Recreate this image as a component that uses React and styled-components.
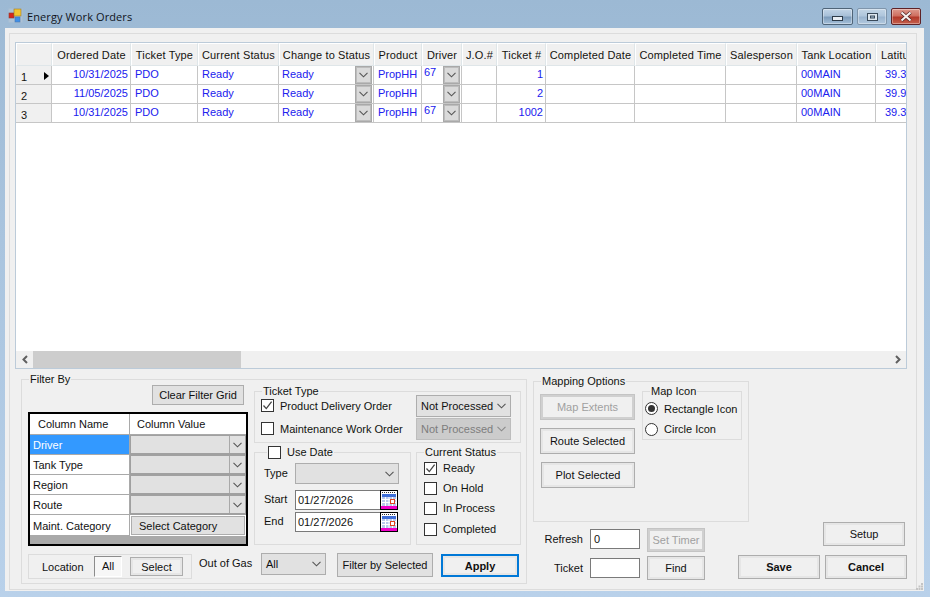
import React from 'react';
import styled, { createGlobalStyle } from 'styled-components';

const GlobalStyle = createGlobalStyle`
  html, body { margin: 0; padding: 0; background: #b9d1ea; }
  body { font-family: "Liberation Sans", Arial, sans-serif; font-size: 11px; color: #111; }
  * { box-sizing: border-box; }
`;

const COLUMNS = [
  { label: 'Ordered Date', width: 79, key: 'date', right: true },
  { label: 'Ticket Type', width: 67, key: 'type' },
  { label: 'Current Status', width: 81, key: 'status' },
  { label: 'Change to Status', width: 95, key: 'change', combo: true },
  { label: 'Product', width: 48, key: 'product' },
  { label: 'Driver', width: 40, key: 'driver', combo: true, top: true },
  { label: 'J.O.#', width: 35, key: 'jo' },
  { label: 'Ticket #', width: 49, key: 'ticket', right: true },
  { label: 'Completed Date', width: 89, key: 'cdate' },
  { label: 'Completed Time', width: 91, key: 'ctime' },
  { label: 'Salesperson', width: 71, key: 'sales' },
  { label: 'Tank Location', width: 79, key: 'tank' },
  { label: 'Latitude', width: 74, key: 'lat', lat: true },
];

const ROWS = [
  { date: '10/31/2025', type: 'PDO', status: 'Ready', change: 'Ready', product: 'PropHH', driver: '67', ticket: '1', tank: '00MAIN', lat: '39.31' },
  { date: '11/05/2025', type: 'PDO', status: 'Ready', change: 'Ready', product: 'PropHH', driver: '', ticket: '2', tank: '00MAIN', lat: '39.96' },
  { date: '10/31/2025', type: 'PDO', status: 'Ready', change: 'Ready', product: 'PropHH', driver: '67', ticket: '1002', tank: '00MAIN', lat: '39.31' },
];

const Window = styled.div`
  width: 930px;
  height: 597px;
  display: flex;
  flex-direction: column;
  overflow: hidden;
  background: linear-gradient(180deg, #9cb9d4 0%, #a9c4de 40%, #b9d1ea 100%);
`;

const TitleBar = styled.div`
  height: 28px;
  flex: none;
  display: flex;
  align-items: flex-start;
  padding: 8px 9px 0 8px;
`;

const Title = styled.span`
  font-family: "Open Sans", sans-serif;
  font-size: 11px;
  letter-spacing: 0.1px;
  line-height: 17px;
  margin-left: 4px;
  color: #10151c;
  flex: 1;
`;

const WinButton = styled.div`
  width: ${(p) => (p.$close || p.$max ? 30 : 31)}px;
  height: 17px;
  margin-left: 4px;
  border-radius: 2px;
  display: flex;
  align-items: center;
  justify-content: center;
  border: 1px solid ${(p) => (p.$close ? '#5e2226' : p.$max ? '#7f95ab' : '#4f6478')};
  box-shadow: inset 0 0 0 1px rgba(255, 255, 255, 0.35);
  background: ${(p) => (p.$close
    ? 'linear-gradient(180deg, #dd9a8e 0%, #cf6f60 45%, #b3392a 55%, #c4604e 100%)'
    : p.$max
      ? 'linear-gradient(180deg, #c3d5e6 0%, #afc6dc 45%, #9ab4cf 55%, #b2c9df 100%)'
      : 'linear-gradient(180deg, #c2d5e7 0%, #a8c0d8 45%, #7d9cbb 55%, #a6c0d9 100%)')};
`;

const MinGlyph = styled.svg`
  margin-top: 4px;
`;

const Client = styled.div`
  flex: 1;
  position: relative;
  margin: 0 6px 6px 5px;
  padding: 5px 7px 1px 4px;
  background: #f0f0f0;
`;

const Frame = styled.div`
  height: 100%;
  border: 1px solid #dcdcdc;
  padding: 8px 9px 0 5px;
  display: flex;
  flex-direction: column;
`;

const GridBox = styled.div`
  height: 327px;
  flex: none;
  display: flex;
  flex-direction: column;
  border: 1px solid #bccbd9;
  background: #fff;
  overflow: hidden;
`;

const GridBody = styled.div`
  flex: 1;
  overflow: hidden;
`;

const Table = styled.table`
  border-collapse: separate;
  border-spacing: 0;
  table-layout: fixed;
  width: ${36 + COLUMNS.reduce((sum, c) => sum + c.width, 0)}px;
`;

const HeadCell = styled.th`
  height: 23px;
  padding: 0 0 0 ${(p) => (p.$lat ? 4 : 0)}px;
  font-weight: normal;
  font-size: 11px;
  letter-spacing: 0.15px;
  text-align: ${(p) => (p.$lat ? 'left' : 'center')};
  white-space: nowrap;
  overflow: hidden;
  color: #15130f;
  background: #f0f0f0;
  border-right: 1px solid #dfe6e9;
  border-bottom: 1px solid #dfe6e9;
  border-left: 1px solid #fff;
  border-top: 1px solid #fff;
`;

const RowHead = styled.td`
  height: 19px;
  padding: 3px 0 0 5px;
  background: #f0f0f0;
  border-right: 1px solid #c6c6c6;
  border-bottom: 1px solid #c6c6c6;
  color: #15130f;
  position: relative;
  font-size: 11px;
`;

const RowMarker = styled.span`
  position: absolute;
  right: 2px;
  top: 6px;
  width: 0;
  height: 0;
  border-left: 5px solid #000;
  border-top: 4.5px solid transparent;
  border-bottom: 4.5px solid transparent;
`;

const Cell = styled.td`
  height: 19px;
  padding: 0 ${(p) => (p.$right ? 2 : 1)}px 2px ${(p) => p.$pad}px;
  border-right: 1px solid #c6c6c6;
  border-bottom: 1px solid #c6c6c6;
  color: #2020ee;
  white-space: nowrap;
  overflow: hidden;
  font-size: 11px;
  text-align: ${(p) => (p.$right ? 'right' : 'left')};
`;

const ComboCell = styled(Cell)`
  padding-bottom: 0;
`;

const ComboWrap = styled.div`
  display: flex;
  align-items: flex-start;
  justify-content: space-between;
  height: 18px;
  line-height: ${(p) => (p.$top ? 13 : 16)}px;
`;

const ComboButton = styled.span`
  width: 17px;
  height: 18px;
  flex: none;
  display: flex;
  align-items: center;
  justify-content: center;
  background: #dadada;
  border: 1px solid #a9a9a9;
  box-shadow: inset 0 0 0 1px #bdbdbd;
`;

const ScrollBar = styled.div`
  height: 17px;
  flex: none;
  display: flex;
  align-items: center;
  background: #f0f0f0;
`;

const ScrollArrow = styled.span`
  width: 17px;
  height: 17px;
  flex: none;
  display: flex;
  align-items: center;
  justify-content: center;
`;

const ScrollTrack = styled.div`
  flex: 1;
  height: 17px;
`;

const ScrollThumb = styled.div`
  width: 208px;
  height: 17px;
  background: #cdcdcd;
`;

const Lower = styled.div`
  display: flex;
  padding: 10px 0 0 6px;
`;

const Group = styled.div`
  position: relative;
  border: 1px solid #dcdcdc;
`;

const Caption = styled.span`
  position: absolute;
  top: -7px;
  left: ${(p) => p.$left || 7}px;
  line-height: 13px;
  padding: 0 1px;
  background: #f0f0f0;
  white-space: nowrap;
  display: flex;
  align-items: center;
  gap: 6px;
  color: #11130f;
`;

const FilterBy = styled(Group)`
  width: 506px;
  height: 205px;
  padding: 5px 0 0 6px;
  flex: none;
`;

const FilterTop = styled.div`
  display: flex;
  gap: 6px;
`;

const FilterLeft = styled.div`
  width: 220px;
  flex: none;
  display: flex;
  flex-direction: column;
  align-items: flex-end;
`;

const Button = styled.div`
  width: ${(p) => p.$w}px;
  height: ${(p) => p.$h}px;
  flex: none;
  display: flex;
  align-items: center;
  justify-content: center;
  white-space: nowrap;
  color: ${(p) => (p.$disabled ? '#a0a0a0' : '#101010')};
  font-weight: ${(p) => (p.$bold ? 'bold' : 'normal')};
  background: ${(p) => (p.$plain ? '#f0f0f0' : '#e1e1e1')};
  border: ${(p) => (p.$primary ? '2px solid #0078d7' : p.$disabled ? '1px solid #c4c4c4' : '1px solid #adadad')};
  box-shadow: ${(p) => (p.$disabled ? 'inset 0 0 0 2px #d0d0d0' : p.$plain ? 'inset 0 0 0 2px #e6e6e6' : 'none')};
`;

const ClearButton = styled(Button)`
  margin: 0 4px 7px 0;
`;

const ValueTable = styled.div`
  width: 220px;
  height: 134px;
  border: 2px solid #000;
  background: #a9a9a9;
  display: grid;
  grid-template-columns: 99px 116px;
  grid-template-rows: 21px 20px 20px 20px 20px 21px;
  column-gap: 1px;
  align-content: start;
`;

const HeadName = styled.div`
  background: #fff;
  border-bottom: 1px solid #a9a9a9;
  padding-left: ${(p) => p.$pad}px;
  line-height: 20px;
`;

const NameCell = styled.div`
  padding-left: 3px;
  line-height: ${(p) => (p.$tall ? 22 : 20)}px;
  border-bottom: 1px solid #a9a9a9;
  background: ${(p) => (p.$active ? '#3399ff' : '#fff')};
  color: ${(p) => (p.$active ? '#fff' : '#111')};
`;

const ValueCell = styled.div`
  display: flex;
  justify-content: flex-end;
  background: #e1e1e1;
  border: 1px solid #a0a0a0;
  border-bottom-width: 2px;
`;

const ValueArrow = styled.span`
  width: 16px;
  display: flex;
  align-items: center;
  justify-content: center;
  border-left: 1px solid #a9a9a9;
`;

const CategoryCell = styled.div`
  background: #fff;
  padding: 1px;
  display: flex;
`;

const CategoryButton = styled.div`
  flex: 1;
  background: #e1e1e1;
  border: 1px solid #adadad;
  padding-left: 7px;
  line-height: 18px;
`;

const FilterRight = styled.div`
  width: 267px;
  flex: none;
  padding-top: 6px;
  display: flex;
  flex-direction: column;
  gap: 9px;
`;

const TicketGroup = styled(Group)`
  height: 52px;
  padding: 2px 9px 0 6px;
`;

const TicketRow = styled.div`
  height: 23px;
  display: flex;
  align-items: center;
  justify-content: space-between;
`;

const CheckLabel = styled.label`
  display: flex;
  align-items: center;
  gap: 6px;
  height: ${(p) => p.$h || 20}px;
  white-space: nowrap;
  color: #11130f;
`;

const Box = styled.span`
  width: 13px;
  height: 13px;
  flex: none;
  display: flex;
  align-items: center;
  justify-content: center;
  background: #fff;
  border: 1px solid #333;
`;

const Select = styled.div`
  width: ${(p) => p.$w}px;
  height: ${(p) => p.$h}px;
  flex: none;
  display: flex;
  align-items: center;
  justify-content: space-between;
  padding: 0 4px;
  background: ${(p) => (p.$disabled ? '#cccccc' : '#e1e1e1')};
  border: 1px solid ${(p) => (p.$disabled ? '#bdbdbd' : '#adadad')};
  color: ${(p) => (p.$disabled ? '#7d7d7d' : '#111')};
`;

const DateStatus = styled.div`
  display: flex;
  gap: 5px;
`;

const UseDate = styled(Group)`
  width: 157px;
  height: 93px;
  padding: 10px 0 0 9px;
  display: flex;
  flex-direction: column;
`;

const DateRow = styled.div`
  display: flex;
  align-items: center;
  margin-bottom: ${(p) => p.$gap}px;
`;

const FieldLabel = styled.span`
  width: 31px;
  flex: none;
  margin-top: -2px;
  color: #11130f;
`;

const DateInput = styled.div`
  width: 85px;
  height: 20px;
  padding-left: 2px;
  line-height: 19px;
  background: #fff;
  border: 1px solid #7a7a7a;
  border-right: none;
`;

const CalendarButton = styled.span`
  width: 18px;
  height: 20px;
  flex: none;
  display: flex;
`;

const CurrentStatus = styled(Group)`
  width: 105px;
  height: 93px;
  padding: 5px 0 0 7px;
`;

const BottomRow = styled.div`
  display: flex;
  align-items: flex-start;
  margin-top: 7px;
`;

const LocationBox = styled.div`
  width: 164px;
  height: 25px;
  flex: none;
  margin-top: 1px;
  border: 1px solid #dcdcdc;
  display: flex;
  align-items: center;
  padding-left: 13px;
`;

const LocationLabel = styled.span`
  width: 52px;
  flex: none;
`;

const AllToggle = styled.span`
  width: 28px;
  height: 21px;
  text-align: center;
  line-height: 19px;
  border: 1px solid #fff;
  border-left-color: #8c8c8c;
  border-top-color: #8c8c8c;
  background: #f7f7f7;
  margin-right: 8px;
`;

const GasLabel = styled.span`
  width: 62px;
  flex: none;
  margin-left: 7px;
  padding-top: 3px;
  line-height: 14px;
`;

const FilterButton = styled(Button)`
  margin-left: 11px;
`;

const ApplyButton = styled(Button)`
  margin: 1px 0 0 8px;
`;

const RightColumn = styled.div`
  flex: 1;
  margin-left: 6px;
  padding-top: 2px;
  display: flex;
  flex-direction: column;
`;

const Mapping = styled(Group)`
  width: 216px;
  height: 141px;
  padding: 9px 0 0 6px;
  display: flex;
  align-items: flex-start;
  gap: 7px;
`;

const MapButtons = styled.div`
  padding-top: 3px;
  display: flex;
  flex-direction: column;
  align-items: flex-end;
  gap: 8px;
`;

const MapIconGroup = styled(Group)`
  width: 100px;
  height: 49px;
  padding: 6px 0 0 2px;
`;

const Radio = styled.span`
  width: 13px;
  height: 13px;
  flex: none;
  border-radius: 50%;
  background: #fff;
  border: 1px solid #333;
  display: flex;
  align-items: center;
  justify-content: center;
  &::after {
    content: '';
    display: ${(p) => (p.$on ? 'block' : 'none')};
    width: 7px;
    height: 7px;
    border-radius: 50%;
    background: #333;
  }
`;

const ActionsRow = styled.div`
  display: flex;
  justify-content: space-between;
`;

const FindBlock = styled.div`
  padding-top: 6px;
  display: grid;
  grid-template-columns: 50px 50px 58px;
  column-gap: 7px;
  row-gap: 4px;
  align-items: center;
  justify-items: start;
`;

const FindLabel = styled.span`
  justify-self: end;
  margin-bottom: ${(p) => (p.$up ? 2 : 0)}px;
`;

const TextBox = styled.div`
  width: 50px;
  height: 20px;
  padding-left: 3px;
  line-height: 18px;
  margin-bottom: ${(p) => (p.$up ? 2 : 0)}px;
  background: #fff;
  border: 1px solid #7a7a7a;
`;

const SaveBlock = styled.div`
  width: 169px;
  display: flex;
  flex-direction: column;
  align-items: flex-end;
  gap: 9px;
`;

const SaveRow = styled.div`
  display: flex;
  gap: 5px;
`;

const SetupButton = styled(Button)`
  margin-right: 2px;
`;

const Grip = styled.svg`
  position: absolute;
  right: 1px;
  bottom: 1px;
`;

function Chevron({ color = '#555' }) {
  return (
    <svg width="9" height="6" viewBox="0 0 9 6">
      <path d="M0.5 0.8 L4.5 4.8 L8.5 0.8" fill="none" stroke={color} strokeWidth="1.1" />
    </svg>
  );
}

function Tick() {
  return (
    <svg width="11" height="11" viewBox="0 0 11 11">
      <path d="M1.5 5.5 L4.3 8.6 L9.6 1.6" fill="none" stroke="#444" strokeWidth="1.3" />
    </svg>
  );
}

function Check({ on, label, h }) {
  return (
    <CheckLabel $h={h}>
      <Box>{on && <Tick />}</Box>
      {label}
    </CheckLabel>
  );
}

function Calendar() {
  return (
    <svg width="18" height="20" viewBox="0 0 18 20">
      <rect x="0.5" y="0.5" width="17" height="19" fill="#fff" stroke="#000" />
      <path d="M2 2.5 H16" stroke="#333" strokeDasharray="1 1" />
      <rect x="2" y="4" width="14" height="3" fill="#3f6fd8" />
      <rect x="2" y="7" width="14" height="9" fill="#b9c9ec" />
      <path d="M2 9.5 H16 M2 12.5 H16 M5.5 7 V16 M9 7 V16 M12.5 7 V16" stroke="#fff" />
      <rect x="10.5" y="9.5" width="4" height="4" fill="#fff" stroke="#e0431c" />
      <rect x="1" y="16" width="16" height="3" fill="#f000c8" />
    </svg>
  );
}

function AppIcon() {
  return (
    <svg width="15" height="15" viewBox="0 0 15 15">
      <rect x="0.5" y="0.5" width="14" height="14" fill="#b7c6d6" opacity="0.6" />
      <rect x="1" y="5" width="5" height="5" fill="#d8251c" stroke="#8a3a30" strokeWidth="0.6" />
      <rect x="6" y="1" width="7" height="7" fill="#f2c531" stroke="#9a7a2a" strokeWidth="0.6" />
      <rect x="7" y="9" width="5" height="5" fill="#3f8fe8" stroke="#4a7ab0" strokeWidth="0.6" />
    </svg>
  );
}

function Arrow({ dir }) {
  return (
    <svg width="8" height="9" viewBox="0 0 8 9">
      <path
        d={dir === 'left' ? 'M6 1 L2.5 4.5 L6 8' : 'M2 1 L5.5 4.5 L2 8'}
        fill="none"
        stroke="#606060"
        strokeWidth="2"
      />
    </svg>
  );
}

function cellPad(col) {
  if (col.lat) return 9;
  if (col.key === 'driver') return 2;
  if (col.key === 'change') return 3;
  return 4;
}

function GridCell({ col, row }) {
  const value = row[col.key] || '';
  if (col.combo) {
    return (
      <ComboCell $pad={cellPad(col)}>
        <ComboWrap $top={col.top}>
          <span>{value}</span>
          <ComboButton><Chevron /></ComboButton>
        </ComboWrap>
      </ComboCell>
    );
  }
  return <Cell $pad={cellPad(col)} $right={col.right}>{value}</Cell>;
}

export default function App() {
  return (
    <Window>
      <GlobalStyle />
      <TitleBar>
        <AppIcon />
        <Title>Energy Work Orders</Title>
        <WinButton>
          <MinGlyph width="11" height="5" viewBox="0 0 11 5">
            <rect x="0.5" y="0.5" width="10" height="4" fill="#e8eef4" stroke="#2d3b49" />
          </MinGlyph>
        </WinButton>
        <WinButton $max>
          <svg width="11" height="8" viewBox="0 0 11 8">
            <rect x="0.5" y="0.5" width="10" height="7" fill="#dce6ef" stroke="#3a4a5a" />
            <rect x="3.5" y="3" width="4" height="2" fill="#a9c0d6" stroke="#3a4a5a" />
          </svg>
        </WinButton>
        <WinButton $close>
          <svg width="14" height="11" viewBox="0 0 14 11">
            <path d="M2.5 1.5 L11.5 9.5 M11.5 1.5 L2.5 9.5" stroke="#4a2020" strokeWidth="3.6" />
            <path d="M2.5 1.5 L11.5 9.5 M11.5 1.5 L2.5 9.5" stroke="#f6f0ee" strokeWidth="2.2" />
          </svg>
        </WinButton>
      </TitleBar>

      <Client>
        <Frame>
          <GridBox>
            <GridBody>
              <Table>
                <colgroup>
                  <col style={{ width: 36 }} />
                  {COLUMNS.map((c) => <col key={c.key} style={{ width: c.width }} />)}
                </colgroup>
                <thead>
                  <tr>
                    <HeadCell />
                    {COLUMNS.map((c) => <HeadCell key={c.key} $lat={c.lat}>{c.label}</HeadCell>)}
                  </tr>
                </thead>
                <tbody>
                  {ROWS.map((row, i) => (
                    <tr key={i}>
                      <RowHead>
                        {i + 1}
                        {i === 0 && <RowMarker />}
                      </RowHead>
                      {COLUMNS.map((c) => <GridCell key={c.key} col={c} row={row} />)}
                    </tr>
                  ))}
                </tbody>
              </Table>
            </GridBody>
            <ScrollBar>
              <ScrollArrow><Arrow dir="left" /></ScrollArrow>
              <ScrollTrack><ScrollThumb /></ScrollTrack>
              <ScrollArrow><Arrow dir="right" /></ScrollArrow>
            </ScrollBar>
          </GridBox>

          <Lower>
            <FilterBy>
              <Caption>Filter By</Caption>
              <FilterTop>
                <FilterLeft>
                  <ClearButton $w={92} $h={20}>Clear Filter Grid</ClearButton>
                  <ValueTable>
                    <HeadName $pad={8}>Column Name</HeadName>
                    <HeadName $pad={7}>Column Value</HeadName>
                    {['Driver', 'Tank Type', 'Region', 'Route'].map((name, i) => (
                      <React.Fragment key={name}>
                        <NameCell $active={i === 0}>{name}</NameCell>
                        <ValueCell><ValueArrow><Chevron /></ValueArrow></ValueCell>
                      </React.Fragment>
                    ))}
                    <NameCell $tall>Maint. Category</NameCell>
                    <CategoryCell><CategoryButton>Select Category</CategoryButton></CategoryCell>
                  </ValueTable>
                </FilterLeft>
                <FilterRight>
                  <TicketGroup>
                    <Caption>Ticket Type</Caption>
                    <TicketRow>
                      <Check on label="Product Delivery Order" />
                      <Select $w={95} $h={22}>Not Processed <Chevron /></Select>
                    </TicketRow>
                    <TicketRow>
                      <Check label="Maintenance Work Order" />
                      <Select $w={95} $h={22} $disabled>Not Processed <Chevron color="#8a8a8a" /></Select>
                    </TicketRow>
                  </TicketGroup>
                  <DateStatus>
                    <UseDate>
                      <Caption $left={12}><Box />Use Date</Caption>
                      <DateRow $gap={6}>
                        <FieldLabel>Type</FieldLabel>
                        <Select $w={104} $h={21}><span /><Chevron /></Select>
                      </DateRow>
                      <DateRow $gap={2}>
                        <FieldLabel>Start</FieldLabel>
                        <DateInput>01/27/2026</DateInput>
                        <CalendarButton><Calendar /></CalendarButton>
                      </DateRow>
                      <DateRow $gap={0}>
                        <FieldLabel>End</FieldLabel>
                        <DateInput>01/27/2026</DateInput>
                        <CalendarButton><Calendar /></CalendarButton>
                      </DateRow>
                    </UseDate>
                    <CurrentStatus>
                      <Caption>Current Status</Caption>
                      <Check on label="Ready" />
                      <Check label="On Hold" />
                      <Check label="In Process" />
                      <Check label="Completed" h={22} />
                    </CurrentStatus>
                  </DateStatus>
                </FilterRight>
              </FilterTop>
              <BottomRow>
                <LocationBox>
                  <LocationLabel>Location</LocationLabel>
                  <AllToggle>All</AllToggle>
                  <Button $w={53} $h={19} $plain>Select</Button>
                </LocationBox>
                <GasLabel>Out of Gas</GasLabel>
                <Select $w={65} $h={22}>All <Chevron /></Select>
                <FilterButton $w={96} $h={24}>Filter by Selected</FilterButton>
                <ApplyButton $w={78} $h={23} $primary $bold $plain>Apply</ApplyButton>
              </BottomRow>
            </FilterBy>

            <RightColumn>
              <Mapping>
                <Caption>Mapping Options</Caption>
                <MapButtons>
                  <Button $w={95} $h={26} $plain $disabled>Map Extents</Button>
                  <Button $w={95} $h={26} $plain>Route Selected</Button>
                  <Button $w={94} $h={26} $plain>Plot Selected</Button>
                </MapButtons>
                <MapIconGroup>
                  <Caption>Map Icon</Caption>
                  <CheckLabel $h={21}><Radio $on />Rectangle Icon</CheckLabel>
                  <CheckLabel $h={20}><Radio />Circle Icon</CheckLabel>
                </MapIconGroup>
              </Mapping>
              <ActionsRow>
                <FindBlock>
                  <FindLabel $up>Refresh</FindLabel>
                  <TextBox $up>0</TextBox>
                  <Button $w={58} $h={24} $plain $disabled>Set Timer</Button>
                  <FindLabel>Ticket</FindLabel>
                  <TextBox />
                  <Button $w={58} $h={24} $plain>Find</Button>
                </FindBlock>
                <SaveBlock>
                  <SetupButton $w={82} $h={24} $plain>Setup</SetupButton>
                  <SaveRow>
                    <Button $w={82} $h={24} $plain $bold>Save</Button>
                    <Button $w={82} $h={24} $plain $bold>Cancel</Button>
                  </SaveRow>
                </SaveBlock>
              </ActionsRow>
            </RightColumn>
          </Lower>
        </Frame>
        <Grip width="7" height="7" viewBox="0 0 7 7">
          <path d="M5 0 h2 v2 h-2z M2.5 2.5 h2 v2 h-2z M5 2.5 h2 v2 h-2z M0 5 h2 v2 h-2z M2.5 5 h2 v2 h-2z M5 5 h2 v2 h-2z" fill="#c4c4c4" />
        </Grip>
      </Client>
    </Window>
  );
}
